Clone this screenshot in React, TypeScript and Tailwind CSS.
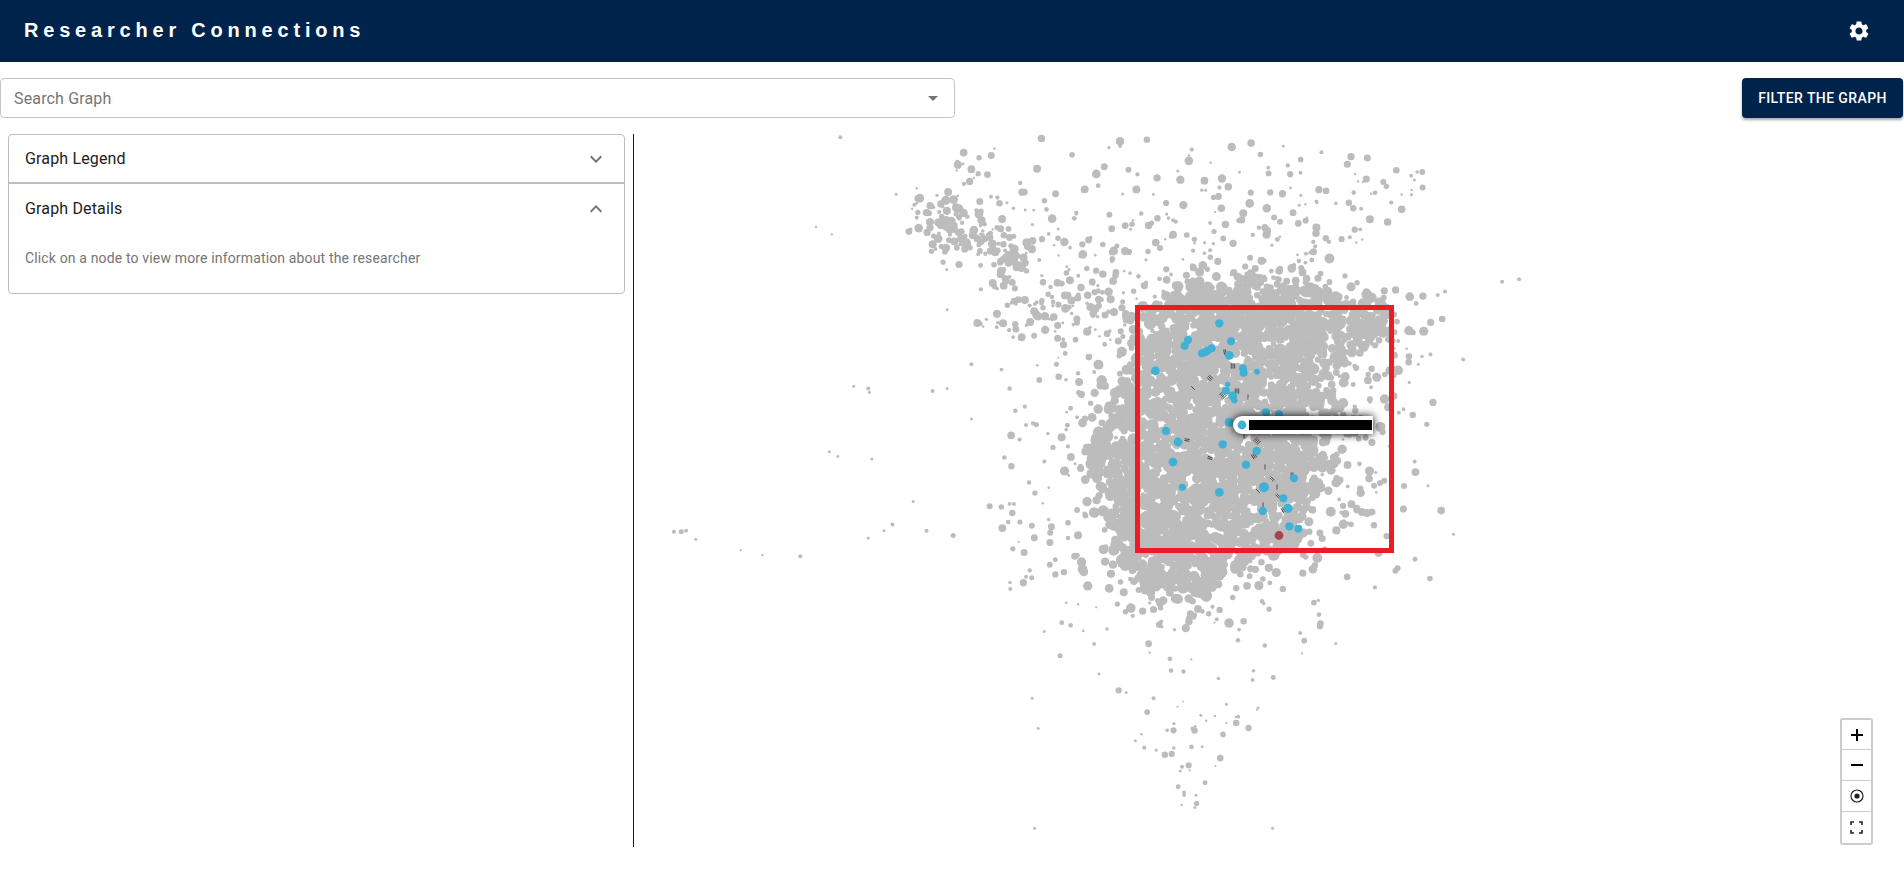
type Dot = { x: number; y: number; r: number };
type Pt = [number, number];

// seeded so the cloud comes out the same each run
function makeRandom(seed: number) {
  let a = seed;
  return () => {
    a = (a + 0x6d2b79f5) | 0;
    let t = Math.imul(a ^ (a >>> 15), 1 | a);
    t = (t + Math.imul(t ^ (t >>> 7), 61 | t)) ^ t;
    return ((t ^ (t >>> 14)) >>> 0) / 4294967296;
  };
}

function inside(p: Pt, poly: Pt[]) {
  let hit = false;
  for (let i = 0, j = poly.length - 1; i < poly.length; j = i++) {
    const [xi, yi] = poly[i];
    const [xj, yj] = poly[j];
    if (yi > p[1] !== yj > p[1] && p[0] < ((xj - xi) * (p[1] - yi)) / (yj - yi) + xi) hit = !hit;
  }
  return hit;
}

const core: Pt[] = [
  [1165, 300], [1200, 288], [1260, 282], [1330, 290], [1388, 308], [1385, 330], [1350, 350], [1328, 372],
  [1330, 410], [1316, 440], [1320, 470], [1306, 510], [1300, 540], [1270, 555], [1225, 572], [1212, 588],
  [1150, 588], [1125, 560], [1108, 528], [1094, 480], [1095, 430], [1114, 398], [1138, 352], [1144, 312],
];

const fringe: Pt[] = [
  [1130, 300], [1200, 258], [1300, 258], [1420, 295], [1420, 350], [1380, 400], [1375, 480], [1340, 545],
  [1290, 590], [1240, 625], [1160, 625], [1090, 585], [1065, 530], [1060, 430], [1085, 370],
];

const upper: Pt[] = [
  [960, 136], [1240, 136], [1440, 170], [1400, 215], [1300, 290], [1130, 345], [1040, 325], [970, 270], [905, 205],
];

// stray nodes, read off the shrunk screenshot
const strays: [number, number, number][] = [
  [555, 438, 2], [561, 438, 2.5], [565, 437, 2], [573, 444, 1.5], [610, 453, 1.2], [628, 457, 1.2], [659, 458, 2],
  [715, 443, 1.5], [728, 437, 1.5], [735, 432, 2], [763, 437, 2], [785, 441, 2.5], [752, 413, 1.5], [815, 417, 3],
  [835, 415, 2], [703, 318, 1.5], [715, 320, 2], [716, 323, 1.5], [683, 372, 1.5], [690, 376, 1.5], [718, 378, 1.5],
  [768, 322, 2], [780, 320, 1.5], [800, 300, 2], [692, 113, 2], [672, 187, 1.2], [685, 193, 1.2], [738, 160, 1.5],
  [755, 155, 1.2], [1237, 232, 2], [1251, 230, 2], [1205, 296, 2], [1190, 240, 2], [1184, 243, 2], [1197, 440, 1.5],
  [1176, 400, 1.5], [1165, 380, 2], [1178, 292, 2], [1160, 270, 2], [1168, 300, 1.5], [1152, 340, 2], [1140, 396, 3],
  [852, 682, 1.5], [1048, 682, 1.5], [984, 665, 1.5], [985, 655, 1.5], [975, 655, 1.5], [982, 600, 2], [965, 620, 1.5],
  [935, 610, 1.5], [850, 575, 1.5], [873, 540, 2.5], [832, 485, 2], [845, 475, 2], [1010, 580, 1.5], [1036, 583, 1.5],
  [1100, 530, 1.5], [860, 520, 1.5], [905, 555, 1.5], [950, 575, 2], [990, 615, 1.5], [972, 635, 1.5], [855, 600, 1.5],
  [845, 350, 2], [860, 380, 2], [870, 300, 2.5], [780, 255, 1.5], [800, 345, 1.5],
];

function buildCloud() {
  const rand = makeRandom(1904);
  const gauss = () => (rand() + rand() + rand() - 1.5) / 0.5;
  const dots: Dot[] = [];
  const scatter = (
    poly: Pt[],
    box: [number, number, number, number],
    count: number,
    min: number,
    max: number,
    jitter: number,
    keep: (y: number) => number = () => 1,
  ) => {
    let n = 0;
    while (n < count) {
      const p: Pt = [box[0] + rand() * (box[2] - box[0]), box[1] + rand() * (box[3] - box[1])];
      if (!inside(p, poly) || rand() > keep(p[1])) continue;
      dots.push({ x: p[0] + gauss() * jitter, y: p[1] + gauss() * jitter, r: min + Math.pow(rand(), 1.2) * (max - min) });
      n++;
    }
  };
  scatter(core, [1090, 280, 1392, 592], 2900, 2.8, 6, 7);
  scatter(fringe, [1060, 258, 1420, 625], 520, 1.8, 5, 6);
  // the upper part thins out towards the top edge
  scatter(upper, [905, 136, 1440, 345], 400, 1.2, 4.4, 0, (y) => 0.25 + ((y - 136) / 209) * 0.75);
  // the dense wing up on the left
  for (let i = 0; i < 130; i++) {
    const t = rand();
    dots.push({
      x: 930 + t * 90 + gauss() * 13,
      y: 212 + t * 50 + gauss() * 13,
      r: 1.5 + rand() * 3.2,
    });
  }
  // scatter below the wing
  for (let i = 0; i < 60; i++) {
    dots.push({ x: 975 + rand() * 130, y: 270 + rand() * 70, r: 1.2 + rand() * 3 });
  }
  // tail below the core
  for (let i = 0; i < 85; i++) {
    const t = Math.pow(rand(), 1.8);
    dots.push({
      x: 1190 + (rand() - 0.5) * (300 - t * 280),
      y: 600 + t * 205,
      r: 1 + rand() * 2.4,
    });
  }
  // thin halo left and right of the core
  for (let i = 0; i < 120; i++) {
    const left = rand() < 0.55;
    dots.push({
      x: left ? 1000 + rand() * 80 : 1335 + rand() * 110,
      y: 300 + rand() * 290,
      r: 1 + rand() * 3,
    });
  }
  for (const [x, y, r] of strays) dots.push({ x: x * 1.2143, y: y * 1.2143, r });
  // the clump right of the box
  for (const [x, y, r] of [[1357, 510, 3.5], [1362, 512, 4], [1367, 513, 4], [1372, 512, 3.5], [1340, 480, 3.5], [1380, 483, 3]] as const) {
    dots.push({ x, y, r });
  }
  return dots;
}

// same offsets as the zoomed crop of the box
const blue: [number, number, number][] = [
  [358, 100, 4.2], [264, 150, 4], [254, 167, 4], [335, 175, 4], [322, 182, 4], [315, 187, 4], [306, 190, 4],
  [393, 154, 4], [388, 196, 4.4], [166, 243, 4.4], [429, 235, 4], [431, 248, 4], [471, 245, 3], [383, 283, 2.6],
  [378, 302, 4], [398, 318, 4.4], [403, 331, 3.2], [498, 367, 4], [537, 372, 4], [388, 397, 4.6], [198, 423, 4.2],
  [234, 456, 4.4], [368, 463, 4.2], [470, 483, 4.2], [219, 516, 4.4], [438, 524, 4.2], [582, 565, 4],
  [247, 592, 3.6], [358, 607, 4.4], [492, 592, 5], [550, 625, 4], [564, 655, 4.6], [488, 663, 4.2],
  [568, 709, 4.2], [595, 716, 4],
];

// little bundles of edges: x, y, angle, line count
const hatches: [number, number, number, number][] = [
  [1225, 352, 80, 2], [1233, 366, 90, 3], [1210, 378, 45, 3], [1223, 395, 135, 4], [1237, 391, 90, 3], [1248, 397, 90, 1],
  [1257, 441, 135, 4], [1254, 456, 60, 3], [1210, 458, 20, 2], [1187, 440, 10, 2], [1265, 467, 90, 1], [1272, 479, 45, 2],
  [1292, 475, 90, 2], [1277, 487, 90, 1], [1258, 491, 45, 1], [1278, 496, 45, 2], [1263, 505, 90, 1], [1283, 510, 60, 2],
  [1193, 388, 45, 1], [1244, 436, 90, 1],
];

const cloud = buildCloud();

function Hatch({ x, y, angle, count }: { x: number; y: number; angle: number; count: number }) {
  return (
    <g transform={`translate(${x} ${y}) rotate(${angle})`}>
      {Array.from({ length: count }, (_, i) => (
        <line key={i} x1={-2.6} x2={2.6} y1={(i - (count - 1) / 2) * 1.7} y2={(i - (count - 1) / 2) * 1.7} stroke="#222" strokeWidth="0.7" />
      ))}
    </g>
  );
}

function GraphCanvas() {
  return (
    <svg viewBox="634 134 1270 713" className="block h-[713px] w-full">
      {cloud.map((d, i) => (
        <circle key={i} cx={d.x} cy={d.y} r={d.r} fill="#bcbcbc" />
      ))}
      {hatches.map(([x, y, angle, count], i) => (
        <Hatch key={i} x={x} y={y} angle={angle} count={count} />
      ))}
      {blue.map(([x, y, r], i) => (
        <circle key={i} cx={1100 + x / 3} cy={290 + y / 3} r={r} fill="#3fb1d6" />
      ))}
      <circle cx={1279} cy={535.5} r={4.4} fill="#a8424d" />
      <rect x={1137.5} y={307.5} width={254} height={243} fill="none" stroke="#ed1c24" strokeWidth="5" />
      <g className="drop-shadow-[0_0_4px_#000]">
        <path d="M1242 416H1373V434H1242a9 9 0 0 1 0-18z" fill="#fff" />
      </g>
      <circle cx={1242} cy={425} r={4.4} fill="#3fb1d6" />
      <rect x={1249} y={420} width={123} height={10} fill="#000" />
    </svg>
  );
}

function ZoomControls() {
  return (
    <div className="absolute bottom-[2px] right-[31px] flex w-[33px] flex-col rounded-[3px] border-2 border-[#cccccc] bg-white text-black">
      <button className="flex h-[30px] items-center justify-center border-b border-[#cccccc]">
        <svg width="14" height="14" viewBox="0 0 14 14"><path d="M7 1v12M1 7h12" stroke="#000" strokeWidth="2" /></svg>
      </button>
      <button className="flex h-[31px] items-center justify-center border-b border-[#cccccc]">
        <svg width="14" height="14" viewBox="0 0 14 14"><path d="M1 7h12" stroke="#000" strokeWidth="2" /></svg>
      </button>
      <button className="flex h-[31px] items-center justify-center border-b border-[#cccccc]">
        <svg width="14" height="14" viewBox="0 0 14 14">
          <circle cx="7" cy="7" r="6" fill="none" stroke="#222" strokeWidth="1.2" />
          <circle cx="7" cy="7" r="2.6" fill="#222" />
        </svg>
      </button>
      <button className="flex h-[31px] items-center justify-center">
        <svg width="13" height="13" viewBox="0 0 13 13">
          <path d="M1 4V1h3M9 1h3v3M12 9v3H9M4 12H1V9" fill="none" stroke="#222" strokeWidth="1.6" />
        </svg>
      </button>
    </div>
  );
}

export default function App() {
  return (
    <div className="h-[869px] w-full overflow-hidden bg-white font-['Roboto',sans-serif] text-[#212121]">
      <header className="flex h-[62px] items-center justify-between bg-[#00234b] pl-6 pr-[33px]">
        <h1 className="pb-[2px] font-['Liberation_Sans',sans-serif] text-[20px] font-bold tracking-[0.24em] text-white">
          Researcher Connections
        </h1>
        <svg width="24" height="24" viewBox="0 0 24 24" fill="#fff">
          <path d="M19.14 12.94c.04-.3.06-.61.06-.94 0-.32-.02-.64-.07-.94l2.03-1.58c.18-.14.23-.41.12-.61l-1.92-3.32c-.12-.22-.37-.29-.59-.22l-2.39.96c-.5-.38-1.03-.7-1.62-.94l-.36-2.54c-.04-.24-.24-.41-.48-.41h-3.84c-.24 0-.43.17-.47.41l-.36 2.54c-.59.24-1.13.57-1.62.94l-2.39-.96c-.22-.08-.47 0-.59.22L2.74 8.87c-.12.21-.08.47.12.61l2.03 1.58c-.05.3-.09.63-.09.94s.02.64.07.94l-2.03 1.58c-.18.14-.23.41-.12.61l1.92 3.32c.12.22.37.29.59.22l2.39-.96c.5.38 1.03.7 1.62.94l.36 2.54c.05.24.24.41.48.41h3.84c.24 0 .44-.17.47-.41l.36-2.54c.59-.24 1.13-.56 1.62-.94l2.39.96c.22.08.47 0 .59-.22l1.92-3.32c.12-.22.07-.47-.12-.61l-2.01-1.58zM12 15.6c-1.98 0-3.6-1.62-3.6-3.6s1.62-3.6 3.6-3.6 3.6 1.62 3.6 3.6-1.62 3.6-3.6 3.6z" />
        </svg>
      </header>

      <div className="flex items-center justify-between pr-px pt-4">
        <div className="flex h-[40px] w-[955px] items-center justify-between rounded border border-[#c4c4c4] pl-[13px] pr-[9px]">
          <span className="pt-px text-base tracking-[0.00938em] text-[#757575]">Search Graph</span>
          <svg width="24" height="24" viewBox="0 0 24 24" fill="#757575"><path d="M7 10l5 5 5-5z" /></svg>
        </div>
        <button className="flex h-[40px] w-[161px] items-center justify-center rounded bg-[#00234b] text-sm font-medium tracking-[0.02857em] text-white shadow-[0_2px_3px_rgba(0,0,0,0.35)]">
          FILTER THE GRAPH
        </button>
      </div>

      <div className="relative mt-4 flex">
        <aside className="h-[713px] w-[634px] shrink-0 border-r border-[#00234b] pl-2 pr-2">
          <div className="rounded border border-[#bdbdbd]">
            <div className="flex h-[49px] items-center justify-between border-b-2 border-[#bdbdbd] pl-4 pr-4">
              <span className="text-base tracking-[0.00938em]">Graph Legend</span>
              <svg width="24" height="24" viewBox="0 0 24 24" fill="#757575"><path d="M16.59 8.59 12 13.17 7.41 8.59 6 10l6 6 6-6z" /></svg>
            </div>
            <div className="flex h-[50px] items-center justify-between pl-4 pr-4">
              <span className="text-base tracking-[0.00938em]">Graph Details</span>
              <svg width="24" height="24" viewBox="0 0 24 24" fill="#757575"><path d="m12 8-6 6 1.41 1.41L12 10.83l4.59 4.58L18 14z" /></svg>
            </div>
            <p className="pb-[25px] pl-4 pt-[14px] text-sm tracking-[0.01071em] text-[#757575]">
              Click on a node to view more information about the researcher
            </p>
          </div>
        </aside>
        <main className="min-w-0 flex-1">
          <GraphCanvas />
        </main>
        <ZoomControls />
      </div>
    </div>
  );
}
